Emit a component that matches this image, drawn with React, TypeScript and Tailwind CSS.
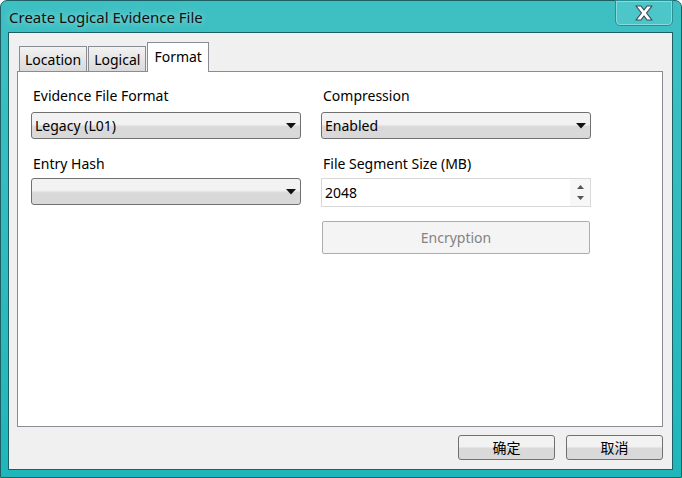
import React from "react";

const font = { fontFamily: '"Noto Sans", "Noto Sans CJK SC", sans-serif' };

function Arrow() {
  return (
    <svg width="10" height="6" viewBox="0 0 10 6" className="shrink-0">
      <path d="M0 0 H10 L5 5.5 Z" fill="#111" />
    </svg>
  );
}

function Select({ value }: { value?: string }) {
  return (
    <div className="flex h-[27px] items-center justify-between rounded-[3px] border border-[#707070] bg-gradient-to-b from-[#f2f2f2] from-45% to-[#d9d9d9] to-55% pl-[3px] pr-[4px] text-[14px] text-black">
      <span>{value}</span>
      <Arrow />
    </div>
  );
}

function Label({ children }: { children: React.ReactNode }) {
  return <div className="h-[20px] pl-[2px] text-[14px] leading-[20px] text-black">{children}</div>;
}

export default function App() {
  return (
    <div
      className="flex h-[478px] w-[682px] flex-col rounded-t-[7px] border border-[#1d5f62] bg-gradient-to-b from-[#3ec0c3] to-[#1fb6ba]"
      style={font}
    >
      <div className="relative flex h-[31px] shrink-0 items-start pl-[8px] pt-[6px]">
        <span className="text-[15px] leading-[20px] text-[#111] [text-shadow:0_0_6px_rgba(255,255,255,0.6)]">
          Create Logical Evidence File
        </span>
        <div className="absolute right-[8px] top-[-1px] flex h-[26px] w-[58px] items-center justify-center rounded-b-[5px] border border-[#2a8f93] bg-[#4cc6c8] shadow-[inset_0_0_0_1px_rgba(255,255,255,0.35)]">
          <svg width="20" height="16" viewBox="0 0 20 16">
            <path
              d="M2 1 H7 L10 5 L13 1 H18 L12.5 8 L18 15 H13 L10 11 L7 15 H2 L7.5 8 Z"
              fill="#fff"
              stroke="#3a4a55"
              strokeWidth="1.2"
              strokeLinejoin="round"
            />
          </svg>
        </div>
      </div>
      <div className="ml-[7px] mr-[8px] mb-[7px] flex flex-1 flex-col border border-[#1d5f62] bg-[#f0f0f0]">
        <div className="ml-[8px] mr-[9px] mt-[9px] flex flex-1 flex-col">
          <div className="flex h-[29px] items-end pl-[2px]">
            <div className="flex h-[25px] items-center border border-b-0 border-[#898c95] bg-gradient-to-b from-[#f2f2f2] to-[#dadada] px-[5px] text-[14px]">
              Location
            </div>
            <div className="ml-[1px] flex h-[25px] items-center border border-b-0 border-[#898c95] bg-gradient-to-b from-[#f2f2f2] to-[#dadada] px-[5px] text-[14px]">
              Logical
            </div>
            <div className="relative z-10 mb-[-1px] ml-[1px] flex h-[30px] items-start border border-b-0 border-[#898c95] bg-white px-[6px] pt-[3px] text-[14px]">
              Format
            </div>
          </div>
          <div className="flex flex-1 flex-col border border-[#898c95] bg-white pl-[13px] pt-[14px]">
            <div className="grid grid-cols-[270px_270px] gap-x-[20px]">
              <div className="flex flex-col gap-[6px]">
                <Label>Evidence File Format</Label>
                <Select value="Legacy (L01)" />
              </div>
              <div className="flex flex-col gap-[6px]">
                <Label>Compression</Label>
                <Select value="Enabled" />
              </div>
              <div className="mt-[15px] flex flex-col gap-[4px]">
                <Label>Entry Hash</Label>
                <Select />
              </div>
              <div className="mt-[15px] flex flex-col gap-[4px]">
                <Label>File Segment Size (MB)</Label>
                <div className="flex h-[29px] items-center justify-between border border-[#d8d8d8] bg-white pl-[3px] text-[14px]">
                  <span>2048</span>
                  <div className="flex h-full w-[20px] flex-col items-center justify-center gap-[7px] bg-[#f7f7f7]">
                    <svg width="7" height="4" viewBox="0 0 7 4">
                      <path d="M0 4 L3.5 0 L7 4 Z" fill="#555" />
                    </svg>
                    <svg width="7" height="4" viewBox="0 0 7 4">
                      <path d="M0 0 L3.5 4 L7 0 Z" fill="#555" />
                    </svg>
                  </div>
                </div>
              </div>
              <div />
              <div className="mt-[14px]">
                <div className="ml-[1px] flex h-[33px] w-[268px] items-center justify-center rounded-[2px] border border-[#adadad] bg-[#f4f4f4] text-[14px] text-[#838383]">
                  Encryption
                </div>
              </div>
            </div>
          </div>
          <div className="flex h-[42px] items-center justify-end gap-[11px] pb-[1px]">
            <div className="flex h-[25px] w-[97px] items-center justify-center rounded-[3px] border border-[#707070] bg-gradient-to-b from-[#f2f2f2] from-45% to-[#d9d9d9] to-55% text-[14px]">
              确定
            </div>
            <div className="flex h-[25px] w-[97px] items-center justify-center rounded-[3px] border border-[#707070] bg-gradient-to-b from-[#f2f2f2] from-45% to-[#d9d9d9] to-55% text-[14px]">
              取消
            </div>
          </div>
        </div>
      </div>
    </div>
  );
}
